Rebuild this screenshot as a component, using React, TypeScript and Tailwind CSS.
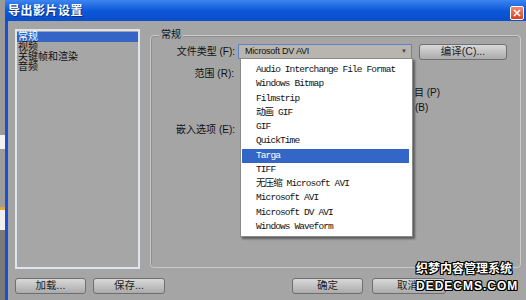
const cjk = "font-['Liberation_Sans','Noto_Sans_CJK_SC',sans-serif]";

const formats = [
  "Audio Interchange File Format",
  "Windows Bitmap",
  "Filmstrip",
  "动画 GIF",
  "GIF",
  "QuickTime",
  "Targa",
  "TIFF",
  "无压缩 Microsoft AVI",
  "Microsoft AVI",
  "Microsoft DV AVI",
  "Windows Waveform",
];

const categories = ["常规", "视频", "关键帧和渲染", "音频"];

function Button({ label, className }: { label: string; className: string }) {
  return (
    <div
      className={`h-[16px] rounded-[3px] border border-[#6f6f6f] bg-gradient-to-b from-[#d9d9d9] to-[#ababab] flex items-center justify-center text-[10.5px] text-[#222] ${className}`}
    >
      {label}
    </div>
  );
}

export default function App() {
  return (
    <div className={`relative w-[526px] h-[300px] overflow-hidden flex bg-[#8d8d8d] ${cjk}`}>
      {/* desktop behind the dialog */}
      <div className="w-[5px] flex flex-col">
        <div className="h-[135px] bg-[#9a9a9a]" />
        <div className="h-[14px] bg-[#f2f2f2]" />
        <div className="h-[58px] bg-[#9c9c9c]" />
        <div className="h-[3px] bg-[#e3a73a]" />
        <div className="h-[20px] bg-[#efefef]" />
        <div className="flex-1 bg-[#7a7a7a]" />
      </div>

      <div className="flex-1 flex flex-col">
        {/* Title bar */}
        <div className="h-[21px] shrink-0 flex items-center justify-between bg-gradient-to-b from-[#3b86f0] via-[#0c58d8] to-[#0a4ecb] pl-[3px] pr-[2px]">
          <span className="text-[12px] font-bold text-white tracking-[0.5px] [text-shadow:1px_1px_0_#0a2f80]">
            导出影片设置
          </span>
          <div className="w-[14px] h-[14px] mt-[5px] rounded-[2px] border border-white bg-gradient-to-b from-[#f08a6a] to-[#d9401c] flex items-center justify-center">
            <svg width="8" height="8" viewBox="0 0 8 8">
              <path d="M1 1 L7 7 M7 1 L1 7" stroke="white" strokeWidth="1.6" />
            </svg>
          </div>
        </div>

        {/* Body */}
        <div className="flex-1 flex flex-col border-l-[3px] border-[#1c4fd0] bg-[#a5a5a5]">
          <div className="flex pl-[7px] pt-[8px] gap-[10px]">
            {/* Category list */}
            <div className="w-[125px] h-[240px] border-2 border-[#dfe5ee] bg-[#a6a6a6] pt-px text-[10px] leading-[10px] text-[#111]">
              {categories.map((c, i) => (
                <div key={c} className={`pl-[1px] h-[10px] ${i === 0 ? "bg-[#3464c6] text-white" : ""}`}>
                  {c}
                </div>
              ))}
            </div>

            {/* General group */}
            <div className="relative mt-[6px] w-[371px] h-[233px] rounded-[4px] border border-[#c9c9c9] shadow-[inset_1px_1px_0_#8e8e8e]">
              <span className="absolute -top-[7px] left-[8px] px-[2px] bg-[#a5a5a5] text-[10px] leading-[12px] text-[#111]">
                常规
              </span>

              <div className="flex items-center mt-[8px] h-[15px]">
                <span className="w-[87px] text-right pr-[3px] text-[10px] text-[#111]">文件类型 (F):</span>
                <div className="w-[174px] h-[15px] border border-[#5e82c4] bg-[#b7b5ad] flex items-center justify-between pl-[6px] pr-[4px]">
                  <span className="text-[9px] text-[#111] tracking-[-0.2px]">Microsoft DV AVI</span>
                  <span className="text-[6px] text-[#444]">▼</span>
                </div>
                <Button label="编译(C)..." className="ml-[7px] w-[88px]" />
              </div>

              <div className="flex items-center mt-[8px] h-[12px]">
                <span className="w-[86px] text-right pr-[3px] text-[10px] text-[#111]">范围 (R):</span>
              </div>

              <div className="mt-[8px] h-[12px] pl-[263px] text-[10px] leading-[12px] text-[#111]">目 (P)</div>
              <div className="mt-[3px] h-[12px] pl-[264px] text-[10px] leading-[12px] text-[#111]">(B)</div>

              <div className="flex items-center mt-[9px] h-[12px]">
                <span className="w-[86px] text-right pr-[2px] text-[10px] text-[#111]">嵌入选项 (E):</span>
              </div>
            </div>
          </div>

          {/* Bottom buttons */}
          <div className="flex mt-[9px] pl-[7px]">
            <Button label="加载..." className="w-[71px]" />
            <Button label="保存..." className="ml-[7px] w-[72px]" />
            <Button label="确定" className="ml-[127px] w-[71px]" />
            <Button label="取消" className="ml-[9px] w-[74px] justify-start pl-[24px]" />
          </div>
        </div>
      </div>

      {/* File type dropdown list */}
      <div className="absolute left-[240px] top-[58px] w-[173px] h-[179px] bg-white border border-[#8a8a8a] shadow-[2px_2px_2px_rgba(0,0,0,0.45)] pt-[4px]">
        {formats.map((f) => (
          <div
            key={f}
            className={`mx-[1px] h-[14.27px] flex items-center pl-[14px] font-['Liberation_Mono','Noto_Sans_CJK_SC',monospace] text-[9.5px] tracking-[-0.9px] ${
              f === "Targa" ? "bg-[#3466c8] text-white mr-[3px]" : "text-[#111]"
            }`}
          >
            {f}
          </div>
        ))}
      </div>

      {/* Watermark */}
      <div className="absolute left-[416px] top-[262px] flex flex-col items-start font-bold text-white [text-shadow:1px_0_#000,-1px_0_#000,0_1px_#000,0_-1px_#000,1px_1px_#000,-1px_-1px_#000,1px_-1px_#000,-1px_1px_#000]">
        <span className="text-[12px] leading-[15px]">织梦内容管理系统</span>
        <span className="text-[12px] leading-[18px] tracking-[1px] font-['Liberation_Sans',sans-serif]">DEDECMS.COM</span>
      </div>
    </div>
  );
}
